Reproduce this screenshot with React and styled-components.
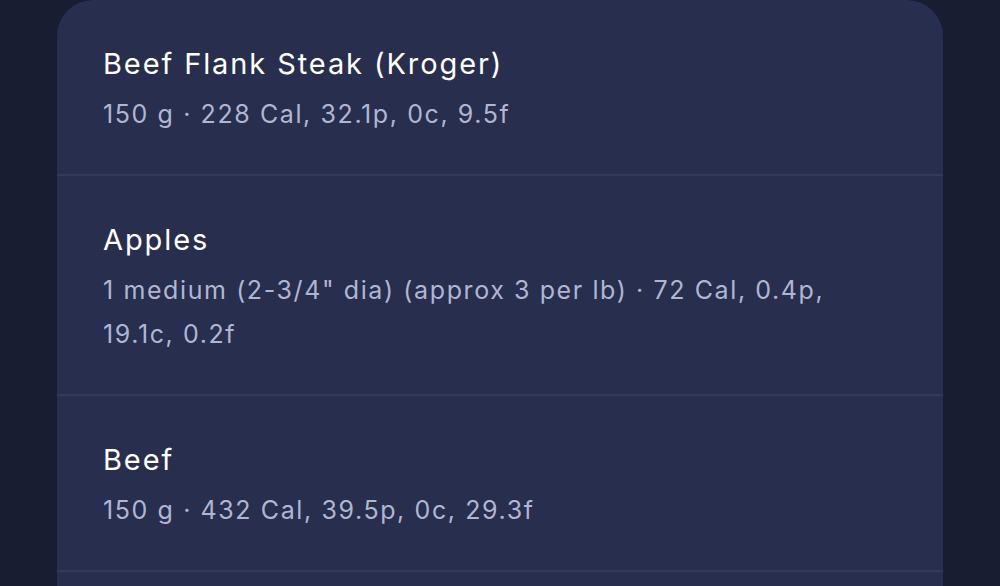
import React from "react";
import styled, { createGlobalStyle } from "styled-components";

const GlobalStyle = createGlobalStyle`
  html, body {
    margin: 0;
    padding: 0;
    background: #181d31;
    overflow: hidden;
  }
  body {
    font-family: Inter, "Noto Sans", sans-serif;
    -webkit-font-smoothing: antialiased;
  }
`;

const Page = styled.div`
  width: 1000px;
  height: 586px;
  background: #181d31;
  padding: 0 57px;
  box-sizing: border-box;
  overflow: hidden;
`;

const Card = styled.ul`
  margin: 0;
  padding: 0;
  list-style: none;
  background: #282e4e;
  border-radius: 36px 36px 0 0;
  min-height: 620px;
`;

const Row = styled.li`
  padding: 44px 46px 38px;
  border-bottom: 2px solid #333959;
`;

const Name = styled.div`
  color: #ffffff;
  font-size: 29px;
  line-height: 40px;
  letter-spacing: 1.9px;
  font-weight: 400;
  margin-bottom: 8px;
`;

const Detail = styled.div`
  color: #b0b6d2;
  font-size: 25px;
  line-height: 44px;
  letter-spacing: 1.6px;
  max-width: 740px;
`;

const foods = [
  { name: "Beef Flank Steak (Kroger)", detail: "150 g · 228 Cal, 32.1p, 0c, 9.5f" },
  {
    name: "Apples",
    detail: "1 medium (2-3/4\" dia) (approx 3 per lb) · 72 Cal, 0.4p, 19.1c, 0.2f",
  },
  { name: "Beef", detail: "150 g · 432 Cal, 39.5p, 0c, 29.3f" },
  { name: "", detail: "" },
];

export default function App() {
  return (
    <Page>
      <GlobalStyle />
      <Card>
        {foods.map((f, i) => (
          <Row key={i}>
            <Name>{f.name}</Name>
            <Detail>{f.detail}</Detail>
          </Row>
        ))}
      </Card>
    </Page>
  );
}
